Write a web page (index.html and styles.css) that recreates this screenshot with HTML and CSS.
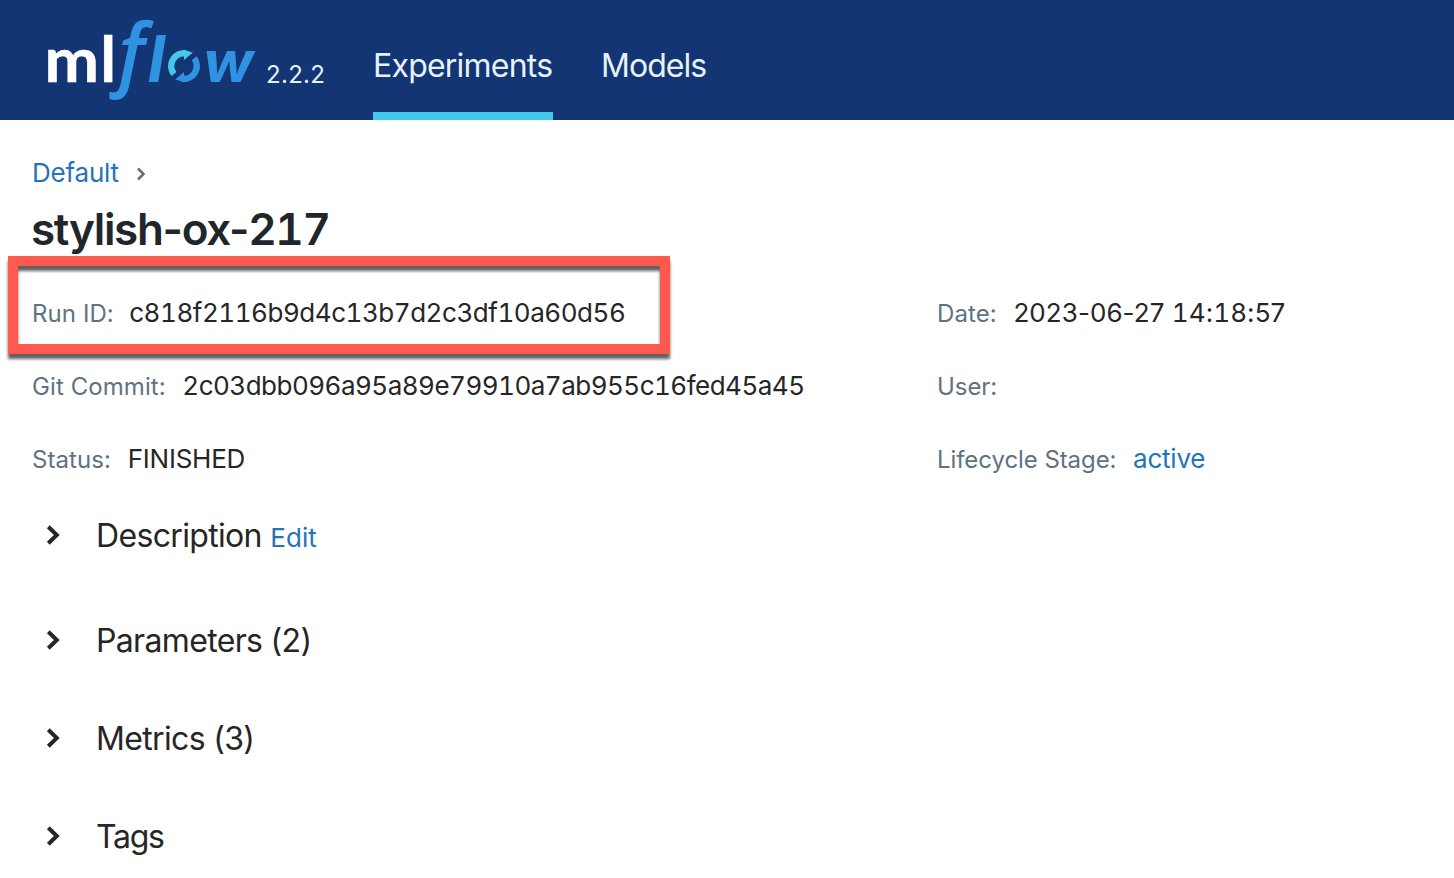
FILE: index.html
```html
<!DOCTYPE html>
<html lang="en">
<head>
<meta charset="utf-8">
<title>MLflow</title>
<link rel="stylesheet" href="styles.css">
</head>
<body>
<header class="topbar">
  <svg class="logo" width="216" height="96" viewBox="44 10 216 96" role="img" aria-label="mlflow">
    <g class="logo-white">
      <text x="44.600" y="82" font-size="61.500" textLength="54.500" lengthAdjust="spacingAndGlyphs">m</text>
      <text x="100.200" y="82" font-size="63.500">l</text>
    </g>
    <g class="logo-blue">
      <text class="logo-f" transform="translate(118 81) scale(.97 1)" font-size="80">f</text>
      <text x="147.700" y="82" font-size="64">l</text>
      <text class="logo-w" transform="translate(203 82) scale(1.055 1)" font-size="56.500">w</text>
    </g>
    <path class="ring-cyan" d="M174 74A12.800 12.800 0 0 1 186 53.360"/>
    <path class="tip-cyan" d="M192.900 52.500L184 60V50Z"/>
    <path class="ring-blue" d="M194.200 58.300A12.800 12.800 0 0 1 182 78.640"/>
    <path class="tip-blue" d="M175.100 79.500L184 72V82Z"/>
  </svg>
  <span class="version">2.2.2</span>
  <nav class="nav">
    <a class="nav-item nav-active">Experiments</a>
    <a class="nav-item nav-models">Models</a>
  </nav>
</header>
<main class="page">
  <div class="breadcrumb">
    <a class="link crumb">Default</a>
    <svg class="crumb-icon" width="10" height="14" viewBox="0 0 10 14"><path d="M2 1.500L7.500 7L2 12.500"/></svg>
  </div>
  <h1 class="title">stylish-ox-<span class="tnum">217</span></h1>
  <div class="meta">
    <div class="field highlighted"><span class="label ls-label">Run ID:</span><span class="value ls-id tnum">c818f2116b9d4c13b7d2c3df10a60d56</span></div>
    <div class="field"><span class="label">Date:</span><span class="value ls-date">2023-06-27 <span class="tnum">14</span>:<span class="tnum">18</span>:57</span></div>
    <div class="field"><span class="label ls-label">Git Commit:</span><span class="value ls-commit tnum">2c03dbb096a95a89e79910a7ab955c16fed45a45</span></div>
    <div class="field"><span class="label ls-stage user">User:</span></div>
    <div class="field"><span class="label ls-label">Status:</span><span class="value ls-tight">FINISHED</span></div>
    <div class="field"><span class="label ls-stage">Lifecycle Stage:</span><a class="link ls-tight">active</a></div>
  </div>
  <section class="section first">
    <svg class="chevron" width="16" height="20" viewBox="0 0 16 20"><path d="M2.300 1.800L10.800 10L2.300 18.200"/></svg>
    <h2 class="section-title">Description</h2><a class="link edit">Edit</a>
  </section>
  <section class="section">
    <svg class="chevron" width="16" height="20" viewBox="0 0 16 20"><path d="M2.300 1.800L10.800 10L2.300 18.200"/></svg>
    <h2 class="section-title">Parameters (2)</h2>
  </section>
  <section class="section">
    <svg class="chevron" width="16" height="20" viewBox="0 0 16 20"><path d="M2.300 1.800L10.800 10L2.300 18.200"/></svg>
    <h2 class="section-title">Metrics (3)</h2>
  </section>
  <section class="section">
    <svg class="chevron" width="16" height="20" viewBox="0 0 16 20"><path d="M2.300 1.800L10.800 10L2.300 18.200"/></svg>
    <h2 class="section-title tags">Tags</h2>
  </section>
</main>
</body>
</html>
```
FILE: styles.css
```css
body {
  margin: 0;
  background: #fff;
  color: #262626;
  font-family: Inter, "Liberation Sans", sans-serif;
  font-size: 26px;
}
.tnum { font-variant-numeric: tabular-nums; }

/* Header */
.topbar {
  display: flex;
  box-sizing: border-box;
  height: 120px;
  padding-left: 44px;
  background: #143573;
  color: #e7f1fb;
}
.logo { flex: none; margin-top: 10px; overflow: visible; }
.logo-white { fill: #fff; stroke: #fff; stroke-width: .5; font-family: Lato, sans-serif; font-weight: 700; }
.logo-blue { fill: #2f93e2; font-style: italic; font-weight: 700; }
.logo-f { font-family: "Open Sans", sans-serif; font-weight: 600; }
.logo-w { font-weight: 700; }
.ring-cyan, .ring-blue { fill: none; stroke-width: 6.5; }
.ring-cyan { stroke: #43c9ed; }
.ring-blue { stroke: #2f93e2; }
.tip-cyan { fill: #43c9ed; }
.tip-blue { fill: #2f93e2; }
.version {
  width: 59px;
  margin-left: 6px;
  padding-top: 35px;
  font-size: 24px;
  line-height: 80px;
  letter-spacing: .3px;
}
.nav { display: flex; gap: 48px; margin-left: 48px; }
.nav-item {
  box-sizing: border-box;
  height: 120px;
  padding-top: 32px;
  font-size: 32px;
  line-height: 67px;
  letter-spacing: -.78px;
}
.nav-active { width: 180px; border-bottom: 8px solid #43c9ed; }
.nav-models { letter-spacing: -.96px; }

/* Page */
.page { padding: 33px 32px 0; }
.link { color: #2374bb; }
.breadcrumb { display: flex; height: 40px; line-height: 39px; }
.crumb { letter-spacing: -.2px; }
.crumb-icon { margin: 14px 0 0 17px; fill: none; stroke: #5f7281; stroke-width: 2.5; }
.title {
  height: 83px;
  margin: 0 0 0 -1px;
  color: #1f272d;
  font-size: 44px;
  font-weight: 600;
  line-height: 72px;
  letter-spacing: -1.32px;
}

/* Run details */
.meta {
  display: grid;
  grid-template-columns: 905px 1fr;
  grid-auto-rows: 73px;
}
.field {
  display: flex;
  position: relative;
  align-items: baseline;
  gap: 16.600px;
  line-height: 73px;
  white-space: nowrap;
}
.label { color: #5f7281; font-size: 24px; letter-spacing: .1px; }
.ls-label { letter-spacing: .08px; }
.ls-stage { letter-spacing: -.07px; }
.user { line-height: 75px; }
.ls-id { margin-left: -1.200px; letter-spacing: -.470px; }
.ls-date { letter-spacing: .07px; }
.ls-commit { letter-spacing: -.52px; }
.ls-tight { letter-spacing: -.22px; }

/* Annotation frame over the run ID */
.highlighted::after {
  content: "";
  position: absolute;
  top: -20px;
  left: -24px;
  box-sizing: border-box;
  width: 662px;
  height: 98px;
  border: 10px solid #ff5a4d;
  filter: drop-shadow(0 5px 1.5px rgba(0, 0, 0, .62));
}

/* Collapsible sections */
.section { display: flex; align-items: baseline; height: 98px; line-height: 82px; }
.section.first { height: 105px; }
.chevron { align-self: flex-start; flex: none; margin: 30px 34px 0 14px; fill: none; stroke: #262626; stroke-width: 4; }
.section-title { margin: 0; font-size: 32px; font-weight: 400; letter-spacing: -.66px; }
.section-title.tags { letter-spacing: -1.3px; }
.edit { margin-left: 8.400px; letter-spacing: .05px; }
```
